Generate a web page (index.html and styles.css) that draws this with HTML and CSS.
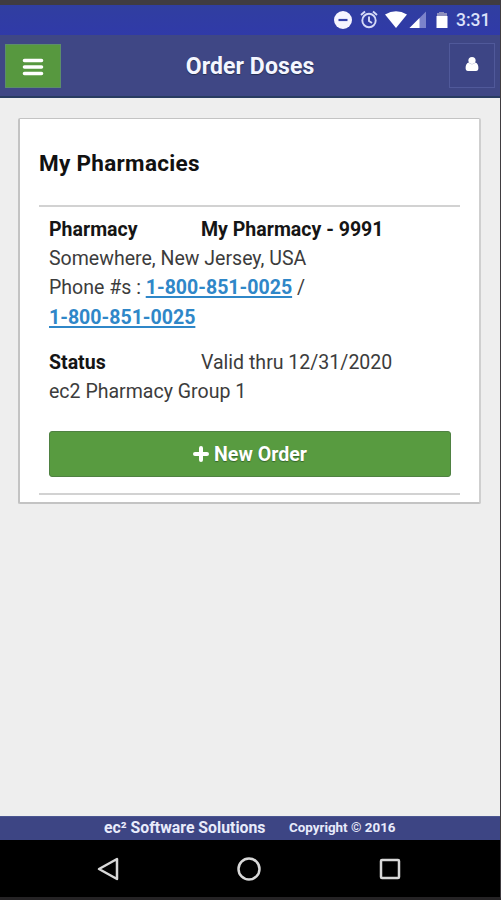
FILE: index.html
```html
<!DOCTYPE html>
<html lang="en">
<head>
<meta charset="utf-8">
<title>Order Doses</title>
<link rel="stylesheet" href="styles.css">
</head>
<body>
<div class="screen">
  <div class="status">
    <svg class="status-icons" viewBox="0 0 124 24" width="124" height="24">
      <circle cx="10" cy="12" r="9" fill="#f6f5ff"/>
      <path d="M5.500 12h9" stroke="#3440a8" stroke-width="2.200"/>
      <g fill="none" stroke="#d5daf7" stroke-width="1.900">
        <circle cx="36" cy="12.500" r="6.700"/>
        <path d="M36 8.500v4.500l3 2M28 7l4-3.500M44 7l-4-3.500"/>
      </g>
      <path d="M52 6.500Q63 0 74 6.500L63 20Z" fill="#fff"/>
      <path d="M93 3.500V20H76.500Z" fill="#7c83cb"/>
      <path d="M86.500 10V20H76.500Z" fill="#fff"/>
      <path d="M104 5h2V4h5v1h3v5h-10z" fill="#8d8fbd"/>
      <path d="M103.500 8h11v12h-11z" fill="#fff"/>
    </svg>
    <span class="time">3:31</span>
  </div>
  <header class="header">
    <button class="menu" aria-label="Menu">
      <svg viewBox="0 0 22 18" width="22" height="18"><path d="M2.500 2.500h17M2.500 9h17M2.500 15.500h17" stroke="#fff" stroke-width="3.600" stroke-linecap="round"/></svg>
    </button>
    <h1 class="title">Order Doses</h1>
    <button class="user" aria-label="Account">
      <svg viewBox="0 0 14 16" width="14" height="16" fill="#fff"><circle cx="7" cy="4.500" r="3.600"/><path d="M3.500 6.500Q7 10 10.500 6.500Q13.400 7.800 13.400 12Q13.400 15 11 15H3Q.6 15 .6 12Q.6 7.800 3.500 6.500Z"/></svg>
    </button>
  </header>
  <main class="content">
    <section class="card">
      <h2 class="heading">My Pharmacies</h2>
      <div class="entry">
        <div class="row"><b class="label">Pharmacy</b><b class="name">My Pharmacy - 9991</b></div>
        <div class="address">Somewhere, New Jersey, USA</div>
        <div class="phones">Phone #s : <a href="#">1-800-851-0025</a> /<br><a href="#">1-800-851-0025</a></div>
        <div class="row state"><b class="label">Status</b><span class="valid">Valid thru 12/31/2020</span></div>
        <div class="group">ec2 Pharmacy Group 1</div>
        <button class="order">
          <svg viewBox="0 0 16 16" width="16" height="16"><path d="M8 2v12M2 8h12" stroke="#fff" stroke-width="4" stroke-linecap="round"/></svg>
          <span>New Order</span>
        </button>
      </div>
    </section>
  </main>
  <footer class="footer"><span class="company">ec² Software Solutions</span><span class="copy">Copyright © 2016</span></footer>
  <nav class="nav">
    <svg viewBox="0 0 26 28" width="26" height="28"><path d="M22 4V24L4 14Z"/></svg>
    <svg viewBox="0 0 26 28" width="26" height="28"><circle cx="13" cy="14" r="10.500"/></svg>
    <svg viewBox="0 0 26 28" width="26" height="28"><rect x="4" y="5" width="18" height="18" rx="1"/></svg>
  </nav>
</div>
</body>
</html>
```

FILE: styles.css
```css
* { box-sizing: border-box; }
body { margin: 0; font-family: Roboto, "Liberation Sans", sans-serif; }
button { padding: 0; font: inherit; display: flex; align-items: center; justify-content: center; }
svg { display: block; flex: none; }
.screen {
  width: 501px; height: 900px;
  border: solid #403c40; border-width: 5px 1px 3px 0; border-bottom-color: #252325;
  background: #eee;
  display: flex; flex-direction: column;
}
.status {
  height: 30px; background: linear-gradient(#303ea0, #303aa8);
  display: flex; align-items: center; justify-content: flex-end; padding-right: 10px;
}
.status-icons { margin-right: -1px; margin-bottom: 1px; }
.time { width: 34px; font-size: 17.5px; font-weight: 500; color: #dde2fa; white-space: nowrap; }
.header {
  height: 63px; background: #3f4785; border-bottom: 2px solid #283c61;
  display: grid; grid-template-columns: 56px 1fr 46px; align-items: start;
  padding: 8px 5px 0 5px;
}
.menu { width: 56px; height: 44px; margin-top: 1px; background: #57983f; border: 1px solid #5c8d6a; padding-top: 2px; }
.user { width: 46px; height: 45px; background: #3d4585; border: 1px solid #50599a; padding-bottom: 3px; }
.title {
  margin: 1px 10px 0 0; font-size: 23px; line-height: 45px; font-weight: 700; color: #f4f6ff;
  text-align: center; text-shadow: 0 1px 1px #252d50; letter-spacing: .1px;
}
.content { flex: 1; padding: 20px 19px 0 18px; }
.card {
  height: 386px; background: #fff; border: 2px solid #c3c3c3; border-top-width: 1px; border-right-color: #cfcfcf;
  padding: 0 19px; border-radius: 2px;
}
.heading { margin: 0; height: 86px; padding-top: 28px; font-size: 22.5px; line-height: 32px; font-weight: 700; color: #111; letter-spacing: .3px; white-space: nowrap; }
.entry {
  height: 290px; border-top: 2px solid #d2d2d2; border-bottom: 2px solid #d2d2d2;
  padding: 8px 9px 0 10px; font-size: 19.55px; line-height: 29.2px; color: #3c3c3c;
}
.entry b { color: #151515; }
.row { display: grid; grid-template-columns: 152px 1fr; white-space: nowrap; }
.state { margin-top: 16px; }
a { color: #2f87c8; font-weight: 700; text-decoration-thickness: 2px; text-underline-offset: 2px; }
.order {
  width: 100%; height: 46px; margin-top: 25px; gap: 5px;
  background: #589b40; color: #fff; border: 1px solid #4f8142; border-radius: 3px;
  font-size: 19.6px; font-weight: 700; text-shadow: 0 1px 1px #35652a;
}
.footer {
  height: 24px; background: #3d4584; color: #e8ebfb; border-top: 1px solid #4a5590;
  display: flex; align-items: center; padding: 0 0 2px 104px; gap: 24px; font-weight: 700; white-space: nowrap;
}
.company { width: 161px; font-size: 15.8px; }
.copy { font-size: 13.4px; }
.nav { height: 57px; background: #000; display: flex; align-items: center; justify-content: space-between; padding: 0 97px 0 95px; }
.nav svg { fill: none; stroke: #d8d8d8; stroke-width: 2.5; stroke-linejoin: round; }
```
